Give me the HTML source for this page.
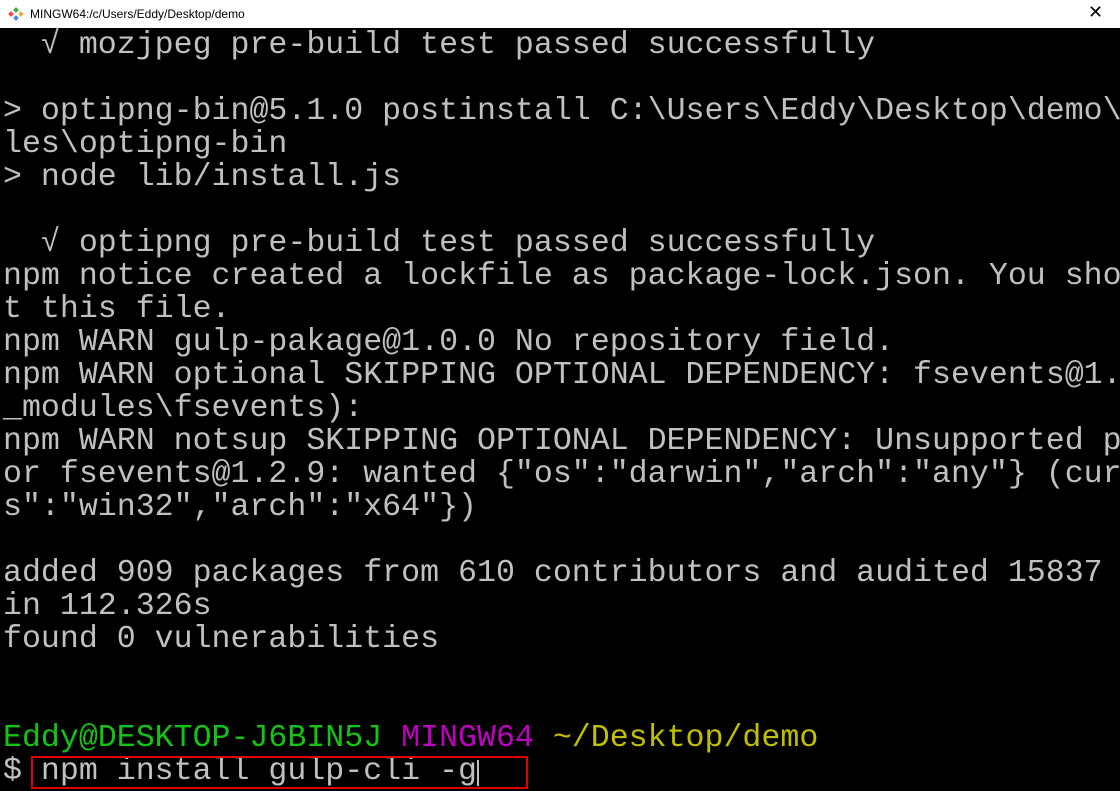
<!DOCTYPE html>
<html><head><meta charset="utf-8"><style>
html,body{margin:0;padding:0;width:1120px;height:791px;overflow:hidden;background:#000}
#title{position:absolute;left:0;top:0;width:1120px;height:28px;background:#fff;font-family:"Liberation Sans",sans-serif;font-size:12px;color:#000}
#title .t{position:absolute;left:30px;top:7px}
#title .x{position:absolute;left:1088px;top:2px;font-size:18px;font-weight:300}
#term{position:absolute;left:3px;top:29px;font-family:"Liberation Mono",monospace;font-size:31.6px;line-height:33px;color:#c0c0c0;white-space:pre}
.g{color:#14c414}.m{color:#c000c0}.y{color:#c0c000}
#box{position:absolute;left:31px;top:756px;width:493px;height:29px;border:2px solid #e00000}
#cur{position:absolute;left:477px;top:760px;width:2px;height:26px;background:#c0c0c0}
</style></head><body>
<div id="title">
<svg style="position:absolute;left:8px;top:7px" width="16" height="14" viewBox="0 0 16 14"><rect x="1" y="5" width="4" height="4" fill="#e44" transform="rotate(45 3 7)"/><rect x="6" y="1" width="4" height="4" fill="#4a4" transform="rotate(45 8 3)"/><rect x="6" y="9" width="4" height="4" fill="#48f" transform="rotate(45 8 11)"/><rect x="11" y="5" width="4" height="4" fill="#ea4" transform="rotate(45 13 7)"/></svg>
<span class="t">MINGW64:/c/Users/Eddy/Desktop/demo</span><span class="x">✕</span></div>
<div id="term">  √ mozjpeg pre-build test passed successfully

> optipng-bin@5.1.0 postinstall C:\Users\Eddy\Desktop\demo\
les\optipng-bin
> node lib/install.js

  √ optipng pre-build test passed successfully
npm notice created a lockfile as package-lock.json. You sho
t this file.
npm WARN gulp-pakage@1.0.0 No repository field.
npm WARN optional SKIPPING OPTIONAL DEPENDENCY: fsevents@1.
_modules\fsevents):
npm WARN notsup SKIPPING OPTIONAL DEPENDENCY: Unsupported p
or fsevents@1.2.9: wanted {"os":"darwin","arch":"any"} (cur
s":"win32","arch":"x64"})

added 909 packages from 610 contributors and audited 15837
in 112.326s
found 0 vulnerabilities


<span class="g">Eddy@DESKTOP-J6BIN5J</span> <span class="m">MINGW64</span> <span class="y">~/Desktop/demo</span>
$ npm install gulp-cli -g</div>
<div id="box"></div><div id="cur"></div>
</body></html>
